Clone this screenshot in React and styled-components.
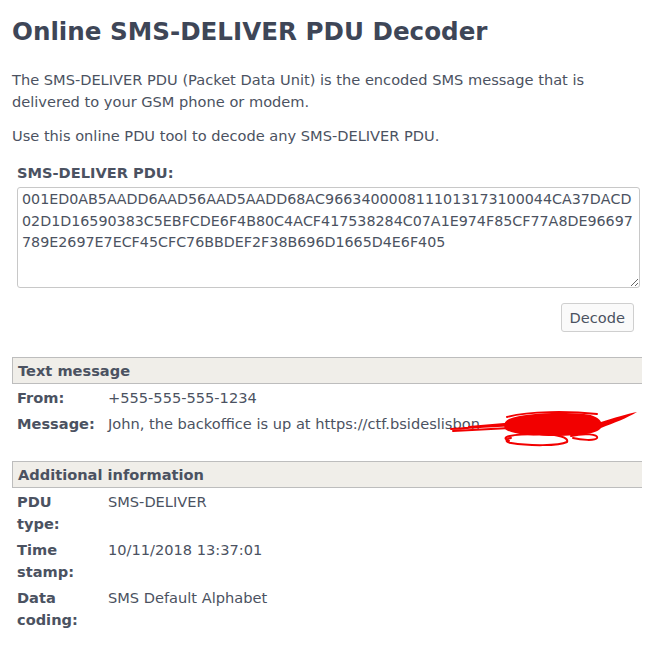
import React from "react";
import styled, { createGlobalStyle } from "styled-components";

const Global = createGlobalStyle`
  html, body { margin: 0; padding: 0; background: #fff; }
  body {
    font-family: "DejaVu Sans", "Liberation Sans", sans-serif;
    font-size: 14.6px;
    line-height: 22px;
    color: #4b5261;
  }
`;

const Page = styled.div`
  width: 630px;
  padding: 15px 12px 20px 12px;
`;

const Title = styled.h1`
  margin: 0 0 20px 0;
  font-size: 24.6px;
  line-height: 34px;
  font-weight: bold;
  color: #3e4657;
`;

const Para = styled.p`
  margin: 0 0 12px 0;
`;

const Form = styled.form`
  padding: 3px 2px 0 5px;
  display: flex;
  flex-direction: column;
`;

const FieldLabel = styled.label`
  font-weight: bold;
  display: block;
  margin-bottom: 3px;
`;

const Area = styled.textarea`
  box-sizing: border-box;
  width: 623px;
  height: 101px;
  border: 1px solid #c8c8c8;
  border-radius: 3px;
  padding: 1px 0 1px 4px;
  font-family: "DejaVu Sans", sans-serif;
  font-size: 14.28px;
  line-height: 21.5px;
  font-kerning: none;
  color: #4b5261;
  resize: vertical;
  word-break: break-all;
  outline: none;
  overflow: hidden;
`;

const Actions = styled.div`
  display: flex;
  justify-content: flex-end;
  padding: 15px 6px 0 0;
`;

const Button = styled.button`
  height: 29px;
  padding: 0 8px;
  border: 1px solid #cfcfcf;
  border-radius: 3px;
  background: #fafafa;
  font-family: "DejaVu Sans", sans-serif;
  font-size: 14.6px;
  color: #4b5261;
`;

const Section = styled.section`
  margin-top: ${(p) => p.$top}px;
`;

const SectionHead = styled.div`
  height: 25px;
  line-height: 25px;
  background: #f0eee9;
  border: 1px solid #bdbdbd;
  border-right: none;
  padding-left: 5px;
  font-weight: bold;
`;

const Table = styled.table`
  border-collapse: collapse;
  margin-top: 1px;
`;

const Label = styled.th`
  width: 80px;
  text-align: left;
  vertical-align: top;
  padding: 2px 5px;
  font-weight: bold;
`;

const Value = styled.td`
  vertical-align: top;
  padding: 2px 5px 2px 6px;
  white-space: nowrap;
  position: relative;
`;

const Scribble = styled.svg`
  position: absolute;
  left: 347px;
  top: -2px;
  width: 190px;
  height: 40px;
  overflow: visible;
`;

const pdu =
  "001ED0AB5AADD6AAD56AAD5AADD68AC9663400008111013173100044CA37DACD02D1D16590383C5EBFCDE6F4B80C4ACF417538284C07A1E974F85CF77A8DE96697789E2697E7ECF45CFC76BBDEF2F38B696D1665D4E6F405";

export default function App() {
  return (
    <Page>
      <Global />
      <Title>Online SMS-DELIVER PDU Decoder</Title>
      <Para>
        The SMS-DELIVER PDU (Packet Data Unit) is the encoded SMS message that is
        delivered to your GSM phone or modem.
      </Para>
      <Para>Use this online PDU tool to decode any SMS-DELIVER PDU.</Para>
      <Form onSubmit={(e) => e.preventDefault()}>
        <FieldLabel htmlFor="pdu">SMS-DELIVER PDU:</FieldLabel>
        <Area id="pdu" defaultValue={pdu} spellCheck={false} />
        <Actions>
          <Button type="submit">Decode</Button>
        </Actions>
      </Form>
      <Section $top={25}>
        <SectionHead>Text message</SectionHead>
        <Table>
          <tbody>
            <tr>
              <Label>From:</Label>
              <Value>+555-555-555-1234</Value>
            </tr>
            <tr>
              <Label>Message:</Label>
              <Value>
                John, the backoffice is up at https://ctf.bsideslisbon
                <Scribble viewBox="0 0 190 40">
                  <path
                    d="M60 10 C75 4 110 3 135 5 C145 6 150 9 152 13 C165 9 178 5 188 3 C178 9 165 14 152 19 C148 25 130 27 100 27 C80 27 62 25 56 20 C54 15 56 12 60 10 Z"
                    fill="#f20000"
                  />
                  <g fill="none" stroke="#f20000" strokeWidth="2" strokeLinecap="round" strokeLinejoin="round">
                    <path d="M2 20 C20 19 40 17 65 16 M4 22 C25 21 45 20 62 19 M20 18 L66 14" />
                    <path d="M58 8 C80 2 120 2 148 5" />
                    <path d="M60 32 C50 28 62 25 90 25 C110 25 120 29 118 33 C110 37 80 37 62 34 C56 33 56 30 62 29" />
                    <path d="M122 27 C135 24 150 25 148 29 C146 32 132 31 124 29" />
                  </g>
                </Scribble>
              </Value>
            </tr>
          </tbody>
        </Table>
      </Section>
      <Section $top={24}>
        <SectionHead>Additional information</SectionHead>
        <Table>
          <tbody>
            <tr>
              <Label>PDU type:</Label>
              <Value>SMS-DELIVER</Value>
            </tr>
            <tr>
              <Label>Time stamp:</Label>
              <Value>10/11/2018 13:37:01</Value>
            </tr>
            <tr>
              <Label>Data coding:</Label>
              <Value>SMS Default Alphabet</Value>
            </tr>
          </tbody>
        </Table>
      </Section>
    </Page>
  );
}
